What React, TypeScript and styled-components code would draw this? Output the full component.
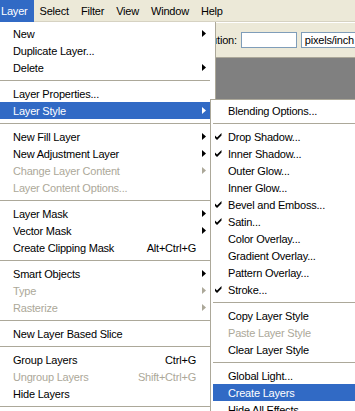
import styled, { createGlobalStyle } from "styled-components";

const GlobalStyle = createGlobalStyle`
  html, body {
    margin: 0;
    padding: 0;
    background: #808080;
  }
`;

const Screen = styled.div`
  position: relative;
  display: flex;
  flex-direction: column;
  width: 355px;
  height: 411px;
  overflow: hidden;
  background: #808080;
  font-family: "Liberation Sans", Arial, sans-serif;
  font-size: 11px;
  letter-spacing: -0.2px;
  color: #000;
`;

const MenuBar = styled.div`
  display: flex;
  height: 21px;
  background: #ece9d8;
  border-bottom: 1px solid #d6d2c2;
`;

const MenuTitle = styled.div<{ $active?: boolean }>`
  padding: 0 6px;
  line-height: 22px;
  height: 22px;
  background: ${(p) => (p.$active ? "#316ac5" : "transparent")};
  color: ${(p) => (p.$active ? "#fff" : "#000")};

  &:first-child {
    margin-left: -5px;
  }
`;

const Toolbar = styled.div`
  display: flex;
  align-items: center;
  gap: 4px;
  height: 34px;
  padding-left: 184px;
  background: #ece9d8;
  border-top: 1px solid #fff;
  border-bottom: 1px solid #aca899;
`;

const Field = styled.div<{ $width: number }>`
  flex-shrink: 0;
  box-sizing: border-box;
  width: ${(p) => p.$width}px;
  height: 16px;
  padding-left: 3px;
  line-height: 14px;
  background: #fff;
  border: 1px solid #7f9db9;
`;

const Canvas = styled.div`
  flex: 1;
  background: #808080;
`;

const Dropdown = styled.div`
  position: absolute;
  top: 22px;
  left: -3px;
  width: 219px;
  box-sizing: border-box;
  padding: 3px 5px 3px 2px;
  background: #fff;
  border: 1px solid #aca899;
  border-top: none;
`;

const SubMenu = styled.div`
  position: absolute;
  top: 99px;
  left: 210px;
  width: 170px;
  box-sizing: border-box;
  padding: 2px;
  background: #fff;
  border: 1px solid #aca899;
`;

const Item = styled.div<{ $active?: boolean; $disabled?: boolean; $indent: number }>`
  position: relative;
  display: flex;
  align-items: center;
  height: 17px;
  padding: 0 14px 0 ${(p) => p.$indent}px;
  white-space: nowrap;
  background: ${(p) => (p.$active ? "#316ac5" : "transparent")};
  color: ${(p) => (p.$active ? "#fff" : p.$disabled ? "#aca899" : "#000")};
`;

const Shortcut = styled.span`
  margin-left: auto;
`;

const Arrow = styled.svg`
  position: absolute;
  right: 4px;
  top: 5px;
`;

const Check = styled.svg`
  position: absolute;
  left: 2px;
  top: 5px;
`;

const Separator = styled.div`
  display: flex;
  align-items: center;
  height: 9px;

  &::after {
    content: "";
    flex: 1;
    height: 1px;
    background: #aca899;
  }
`;

type Entry =
  | "-"
  | {
      label: string;
      shortcut?: string;
      sub?: boolean;
      disabled?: boolean;
      active?: boolean;
      checked?: boolean;
    };

const layerMenu: Entry[] = [
  { label: "New", sub: true },
  { label: "Duplicate Layer..." },
  { label: "Delete", sub: true },
  "-",
  { label: "Layer Properties..." },
  { label: "Layer Style", sub: true, active: true },
  "-",
  { label: "New Fill Layer", sub: true },
  { label: "New Adjustment Layer", sub: true },
  { label: "Change Layer Content", sub: true, disabled: true },
  { label: "Layer Content Options...", disabled: true },
  "-",
  { label: "Layer Mask", sub: true },
  { label: "Vector Mask", sub: true },
  { label: "Create Clipping Mask", shortcut: "Alt+Ctrl+G" },
  "-",
  { label: "Smart Objects", sub: true },
  { label: "Type", sub: true, disabled: true },
  { label: "Rasterize", sub: true, disabled: true },
  "-",
  { label: "New Layer Based Slice" },
  "-",
  { label: "Group Layers", shortcut: "Ctrl+G" },
  { label: "Ungroup Layers", shortcut: "Shift+Ctrl+G", disabled: true },
  { label: "Hide Layers" },
  "-",
];

const styleMenu: Entry[] = [
  { label: "Blending Options..." },
  "-",
  { label: "Drop Shadow...", checked: true },
  { label: "Inner Shadow...", checked: true },
  { label: "Outer Glow..." },
  { label: "Inner Glow..." },
  { label: "Bevel and Emboss...", checked: true },
  { label: "Satin...", checked: true },
  { label: "Color Overlay..." },
  { label: "Gradient Overlay..." },
  { label: "Pattern Overlay..." },
  { label: "Stroke...", checked: true },
  "-",
  { label: "Copy Layer Style" },
  { label: "Paste Layer Style", disabled: true },
  { label: "Clear Layer Style" },
  "-",
  { label: "Global Light..." },
  { label: "Create Layers", active: true },
  { label: "Hide All Effects" },
];

const MenuEntries = ({ entries, indent }: { entries: Entry[]; indent: number }) => (
  <>
    {entries.map((e, i) =>
      e === "-" ? (
        <Separator key={i} />
      ) : (
        <Item key={i} $indent={indent} $active={e.active} $disabled={e.disabled}>
          {e.checked && (
            <Check width="7" height="7" viewBox="0 0 7 7">
              <polygon points="0,2.5 2,4.5 6.5,0 6.5,2.5 2,7 0,5" fill="currentColor" />
            </Check>
          )}
          {e.label}
          {e.shortcut && <Shortcut>{e.shortcut}</Shortcut>}
          {e.sub && (
            <Arrow width="4" height="7" viewBox="0 0 4 7">
              <polygon points="0,0 4,3.5 0,7" fill="currentColor" />
            </Arrow>
          )}
        </Item>
      )
    )}
  </>
);

const App = () => {
  return (
    <Screen>
      <GlobalStyle />
      <MenuBar>
        <MenuTitle $active>Layer</MenuTitle>
        <MenuTitle>Select</MenuTitle>
        <MenuTitle>Filter</MenuTitle>
        <MenuTitle>View</MenuTitle>
        <MenuTitle>Window</MenuTitle>
        <MenuTitle>Help</MenuTitle>
      </MenuBar>
      <Toolbar>
        <span>Resolution:</span>
        <Field $width={56} />
        <Field $width={80}>pixels/inch</Field>
      </Toolbar>
      <Canvas />
      <Dropdown>
        <MenuEntries entries={layerMenu} indent={13} />
      </Dropdown>
      <SubMenu>
        <MenuEntries entries={styleMenu} indent={15} />
      </SubMenu>
    </Screen>
  );
};

export default App;
